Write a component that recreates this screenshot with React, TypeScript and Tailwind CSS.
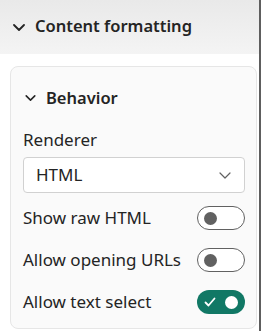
import { useState } from 'react';

const Chevron = ({ className }: { className?: string }) => (
    <svg viewBox="0 0 12 7" className={className} fill="none" stroke="currentColor" strokeLinecap="round" strokeLinejoin="round">
        <path d="M1 1l5 5 5-5" />
    </svg>
);

interface ToggleProps {
    on: boolean;
    onChange: () => void;
}

const Toggle = ({ on, onChange }: ToggleProps) => (
    <button
        onClick={onChange}
        className={
            on
                ? 'relative w-[48px] h-[24px] rounded-full bg-[#117865] flex items-center justify-between pl-[7px] pr-[7px]'
                : 'relative w-[48px] h-[24px] rounded-full border border-[#616161] bg-white flex items-center pl-[6px]'
        }
    >
        {on ? (
            <>
                <svg viewBox="0 0 12 10" className="w-[12px] h-[10px]" fill="none" stroke="white" strokeWidth="1.8" strokeLinecap="round" strokeLinejoin="round">
                    <path d="M1.5 5.5l3 3 6-7" />
                </svg>
                <span className="w-[13px] h-[13px] rounded-full bg-white" />
            </>
        ) : (
            <span className="w-[13px] h-[13px] rounded-full bg-[#616161]" />
        )}
    </button>
);

export default function App() {
    const [rawHtml, setRawHtml] = useState(false);
    const [openUrls, setOpenUrls] = useState(false);
    const [textSelect, setTextSelect] = useState(true);

    const rows = [
        { label: 'Show raw HTML', on: rawHtml, set: () => setRawHtml(!rawHtml) },
        { label: 'Allow opening URLs', on: openUrls, set: () => setOpenUrls(!openUrls) },
        { label: 'Allow text select', on: textSelect, set: () => setTextSelect(!textSelect) },
    ];

    return (
        <div
            className="w-[261px] h-[331px] overflow-hidden flex bg-white text-[#242424]"
            style={{ fontFamily: '"Noto Sans", "Open Sans", sans-serif' }}
        >
            <div className="flex-1 flex flex-col">
                <div className="h-[54px] shrink-0 bg-gradient-to-b from-[#e9e9e9] to-[#f4f4f4] flex items-center pl-[13px] gap-[10px]">
                    <Chevron className="w-[12px] h-[7px] stroke-[1.8] text-[#242424]" />
                    <span className="text-[16.5px] font-semibold leading-none -mt-[2px]">Content formatting</span>
                </div>

                <div className="pt-[12px] pl-[10px] pr-[2px]">
                    <div className="rounded-lg border border-[#e6e6e6] bg-[#fafafa] pt-[19px] pb-[5px] pl-[12px] pr-[11px]">
                        <div className="h-[24px] flex items-center gap-[10px] pl-[2px]">
                            <Chevron className="w-[11px] h-[6px] stroke-[1.8] text-[#242424]" />
                            <span className="text-[16.5px] font-semibold leading-none">Behavior</span>
                        </div>

                        <div className="mt-[18px] h-[24px] flex items-center text-[17px]">Renderer</div>

                        <div className="mt-[5px] h-[36px] rounded-[4px] border border-[#d1d1d1] bg-white flex items-center justify-between pl-[12px] pr-[13px]">
                            <span className="text-[17px]">HTML</span>
                            <Chevron className="w-[12px] h-[7px] stroke-[1.2] text-[#616161]" />
                        </div>

                        <div className="mt-[4px] flex flex-col">
                            {rows.map((r) => (
                                <div key={r.label} className="h-[42px] flex items-center justify-between">
                                    <span className="text-[17px]">{r.label}</span>
                                    <Toggle on={r.on} onChange={r.set} />
                                </div>
                            ))}
                        </div>
                    </div>
                </div>
            </div>
            <div className="w-[2px] shrink-0 bg-[#5e5e5e]" />
        </div>
    );
}
